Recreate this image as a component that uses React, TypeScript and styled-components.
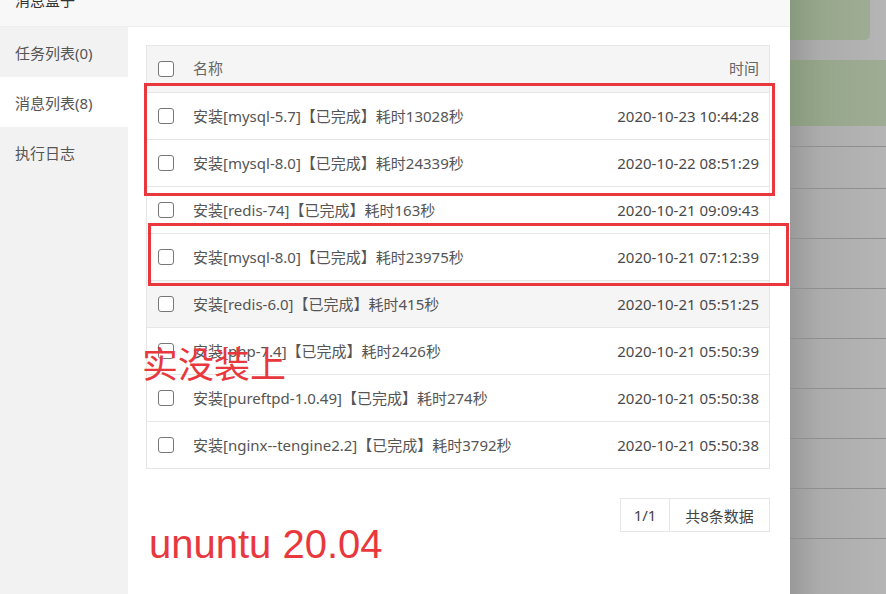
import React from "react"
import styled, { createGlobalStyle } from "styled-components"

const GlobalStyle = createGlobalStyle`
  html, body {
    margin: 0;
    padding: 0;
    background: #b4b4b4;
  }
  body {
    font-family: "Noto Sans", "Noto Sans CJK SC", sans-serif;
  }
  * {
    box-sizing: border-box;
  }
`

const Screen = styled.div`
  display: flex;
  width: 886px;
  height: 594px;
  overflow: hidden;
`

const Panel = styled.div`
  position: relative;
  width: 790px;
  flex-shrink: 0;
  display: flex;
  flex-direction: column;
  background: #fff;
`

const TitleBar = styled.div`
  height: 27px;
  flex-shrink: 0;
  background: #f8f8f8;
  border-bottom: 1px solid #efefef;
  padding-left: 15px;
  overflow: hidden;
`

const TitleText = styled.div`
  margin-top: -8px;
  font-size: 15px;
  line-height: 16px;
  color: #333;
`

const Body = styled.div`
  flex: 1;
  display: flex;
  min-height: 0;
`

const Sidebar = styled.div`
  width: 128px;
  flex-shrink: 0;
  background: #f2f2f2;
  display: flex;
  flex-direction: column;
`

const NavItem = styled.div<{ $active?: boolean }>`
  height: 50px;
  display: flex;
  align-items: center;
  padding-left: 15px;
  font-size: 15px;
  color: #555;
  background: ${(p) => (p.$active ? "#fff" : "transparent")};
`

const Content = styled.div`
  flex: 1;
  padding: 18px 20px 0 18px;
  display: flex;
  flex-direction: column;
`

const Table = styled.div`
  border: 1px solid #e6e6e6;
  border-bottom: none;
`

const Row = styled.div<{ $head?: boolean; $hover?: boolean }>`
  height: 47px;
  display: flex;
  align-items: center;
  padding: 0 10px;
  border-bottom: 1px solid #e6e6e6;
  background: ${(p) => (p.$head || p.$hover ? "#f5f5f5" : "#fff")};
  font-size: 15px;
  line-height: 20px;
  color: ${(p) => (p.$head ? "#666" : "#555")};
`

const Check = styled.span`
  width: 16px;
  height: 16px;
  flex-shrink: 0;
  border: 1px solid #777;
  border-radius: 3px;
  background: #fff;
  margin-left: 1px;
`

const Name = styled.div<{ $head?: boolean }>`
  flex: 1;
  margin-left: 19px;
  white-space: nowrap;
  margin-top: ${(p) => (p.$head ? "-2px" : "-1px")};
`

const Time = styled.div<{ $head?: boolean }>`
  white-space: nowrap;
  text-align: right;
  color: ${(p) => (p.$head ? "#666" : "#4a4a4a")};
  margin-top: ${(p) => (p.$head ? "-2px" : "0")};
`

const Pager = styled.div`
  margin-top: 29px;
  align-self: flex-end;
  display: flex;
  height: 34px;
  border: 1px solid #e6e6e6;
`

const PagerCell = styled.div<{ $w: number }>`
  width: ${(p) => p.$w}px;
  display: flex;
  align-items: center;
  justify-content: center;
  font-size: 15px;
  color: #444;
  & + & {
    border-left: 1px solid #e6e6e6;
  }
`

const Mark = styled.div<{ $l: number; $t: number; $w: number; $h: number }>`
  position: absolute;
  left: ${(p) => p.$l}px;
  top: ${(p) => p.$t}px;
  width: ${(p) => p.$w}px;
  height: ${(p) => p.$h}px;
  border: 3px solid #e8383d;
  pointer-events: none;
`

const Note = styled.div<{ $l: number; $t: number; $size: number; $latin?: boolean }>`
  position: absolute;
  left: ${(p) => p.$l}px;
  top: ${(p) => p.$t}px;
  font-size: ${(p) => p.$size}px;
  line-height: ${(p) => p.$size}px;
  color: #e8383d;
  white-space: nowrap;
  font-family: ${(p) =>
    p.$latin ? `"Liberation Sans", sans-serif` : `"Noto Sans CJK SC", sans-serif`};
`

/* dimmed page behind the drawer */
const Backdrop = styled.div`
  flex: 1;
  display: flex;
  flex-direction: column;
  background: linear-gradient(90deg, #999 0%, #acacac 30%, #b5b5b5 100%);
`

const GreenCard = styled.div<{ $w?: number; $h: number; $mt?: number }>`
  width: ${(p) => (p.$w ? `${p.$w}px` : "100%")};
  height: ${(p) => p.$h}px;
  margin-top: ${(p) => p.$mt ?? 0}px;
  flex-shrink: 0;
  background: linear-gradient(90deg, #889a7d 0%, #97a78c 40%, #9fac95 100%);
  border-bottom-right-radius: ${(p) => (p.$w ? "5px" : "0")};
`

const BgRow = styled.div<{ $h: number; $first?: boolean }>`
  height: ${(p) => p.$h}px;
  flex-shrink: 0;
  border-top: ${(p) => (p.$first ? "none" : "1px solid #8f8f8f")};
`

const rows = [
  { name: "安装[mysql-5.7]【已完成】耗时13028秒", time: "2020-10-23 10:44:28" },
  { name: "安装[mysql-8.0]【已完成】耗时24339秒", time: "2020-10-22 08:51:29" },
  { name: "安装[redis-74]【已完成】耗时163秒", time: "2020-10-21 09:09:43" },
  { name: "安装[mysql-8.0]【已完成】耗时23975秒", time: "2020-10-21 07:12:39" },
  { name: "安装[redis-6.0]【已完成】耗时415秒", time: "2020-10-21 05:51:25", hover: true },
  { name: "安装[php-7.4]【已完成】耗时2426秒", time: "2020-10-21 05:50:39" },
  { name: "安装[pureftpd-1.0.49]【已完成】耗时274秒", time: "2020-10-21 05:50:38" },
  { name: "安装[nginx--tengine2.2]【已完成】耗时3792秒", time: "2020-10-21 05:50:38" },
]

const App: React.FC = () => {
  return (
    <>
      <GlobalStyle />
      <Screen>
        <Panel>
          <TitleBar>
            <TitleText>消息盒子</TitleText>
          </TitleBar>
          <Body>
            <Sidebar>
              <NavItem>任务列表(0)</NavItem>
              <NavItem $active>消息列表(8)</NavItem>
              <NavItem>执行日志</NavItem>
            </Sidebar>
            <Content>
              <Table>
                <Row $head>
                  <Check />
                  <Name $head>名称</Name>
                  <Time $head>时间</Time>
                </Row>
                {rows.map((r, i) => (
                  <Row key={i} $hover={r.hover}>
                    <Check />
                    <Name>{r.name}</Name>
                    <Time>{r.time}</Time>
                  </Row>
                ))}
              </Table>
              <Pager>
                <PagerCell $w={48}>1/1</PagerCell>
                <PagerCell $w={100}>共8条数据</PagerCell>
              </Pager>
            </Content>
          </Body>

          {/* red annotations drawn on top of the screenshot */}
          <Mark $l={144} $t={83} $w={631} $h={113} />
          <Mark $l={148} $t={223} $w={641} $h={63} />
          <Note $l={142} $t={344} $size={36}>实没装上</Note>
          <Note $l={149} $t={524} $size={40} $latin>ununtu 20.04</Note>
        </Panel>
        <Backdrop>
          <GreenCard $w={80} $h={40} />
          <GreenCard $h={66} $mt={20} />
          <BgRow $h={20} $first />
          <BgRow $h={42} />
          {Array.from({ length: 8 }).map((_, i) => (
            <BgRow key={i} $h={50} />
          ))}
        </Backdrop>
      </Screen>
    </>
  )
}

export default App
